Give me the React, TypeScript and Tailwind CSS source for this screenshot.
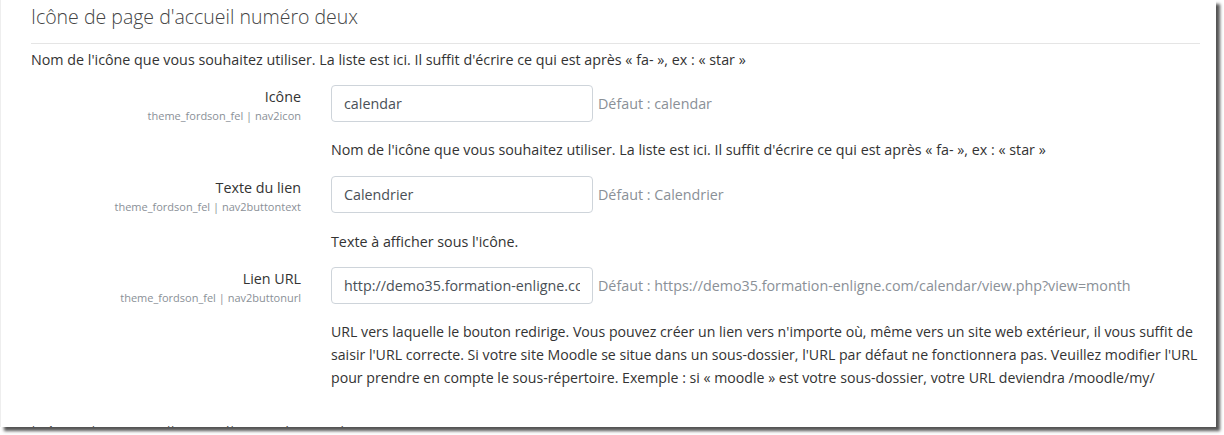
import React from "react";

const font = { fontFamily: '"Open Sans", "Noto Sans", sans-serif' };

type RowProps = {
  label: string;
  setting: string;
  value: string;
  fallback: string;
};

function SettingRow({ label, setting, value, fallback }: RowProps) {
  return (
    <div className="flex items-start">
      <div className="w-[270px] shrink-0 flex flex-col items-end pt-[1px]">
        <span className="text-[14.3px] leading-[22px] text-[#333]">{label}</span>
        <span className="text-[11px] leading-[16px] text-[#8a9097]">{setting}</span>
      </div>
      <div className="ml-[30px] flex items-center">
        <div className="w-[262px] h-[37px] border border-[#ced4da] rounded-[4px] px-[12px] flex items-center">
          <div className="w-full overflow-hidden whitespace-nowrap text-[14.3px] text-[#495057]">{value}</div>
        </div>
        <span className="ml-[5px] text-[14.3px] text-[#8a9097] whitespace-nowrap">{fallback}</span>
      </div>
    </div>
  );
}

export default function App() {
  return (
    <div className="w-[1224px] h-[435px] bg-white" style={font}>
      <div className="w-[1216px] h-[427px] bg-white overflow-hidden border-l border-[#eeeeee] shadow-[4px_4px_3px_#555]">
        <div className="pl-[30px] pr-[15px]">
          <h3 className="pt-[5px] text-[19.5px] leading-[24px] font-light text-[#444]">
            Icône de page d'accueil numéro deux
          </h3>
          <div className="mt-[14px] h-px bg-[#e5e5e5] w-[1169px]" />
          <p className="mt-[5px] text-[14.3px] leading-[22px] text-[#333]">
            Nom de l'icône que vous souhaitez utiliser. La liste est ici. Il suffit d'écrire ce qui est après « fa- », ex : « star »
          </p>

          <div className="mt-[14px]">
            <SettingRow
              label="Icône"
              setting="theme_fordson_fel | nav2icon"
              value="calendar"
              fallback="Défaut : calendar"
            />
          </div>
          <p className="ml-[300px] mt-[14px] text-[14.3px] leading-[23px] text-[#333]">
            Nom de l'icône que vous souhaitez utiliser. La liste est ici. Il suffit d'écrire ce qui est après « fa- », ex : « star »
          </p>

          <div className="mt-[15px]">
            <SettingRow
              label="Texte du lien"
              setting="theme_fordson_fel | nav2buttontext"
              value="Calendrier"
              fallback="Défaut : Calendrier"
            />
          </div>
          <p className="ml-[300px] mt-[15px] text-[14.3px] leading-[23px] text-[#333]">
            Texte à afficher sous l'icône.
          </p>

          <div className="mt-[14px]">
            <SettingRow
              label="Lien URL"
              setting="theme_fordson_fel | nav2buttonurl"
              value="http://demo35.formation-enligne.com/my/"
              fallback="Défaut : https://demo35.formation-enligne.com/calendar/view.php?view=month"
            />
          </div>
          <p className="ml-[300px] mt-[14px] w-[876px] text-[14.15px] leading-[23px] text-[#333]">
            URL vers laquelle le bouton redirige. Vous pouvez créer un lien vers n'importe où, même vers un site web extérieur, il vous suffit de saisir l'URL correcte. Si votre site Moodle se situe dans un sous-dossier, l'URL par défaut ne fonctionnera pas. Veuillez modifier l'URL pour prendre en compte le sous-répertoire. Exemple : si « moodle » est votre sous-dossier, votre URL deviendra /moodle/my/
          </p>

          <h3 className="mt-[33px] text-[19.5px] leading-[24px] font-light text-[#444]">
            Icône de page d'accueil numéro trois
          </h3>
        </div>
      </div>
    </div>
  );
}
